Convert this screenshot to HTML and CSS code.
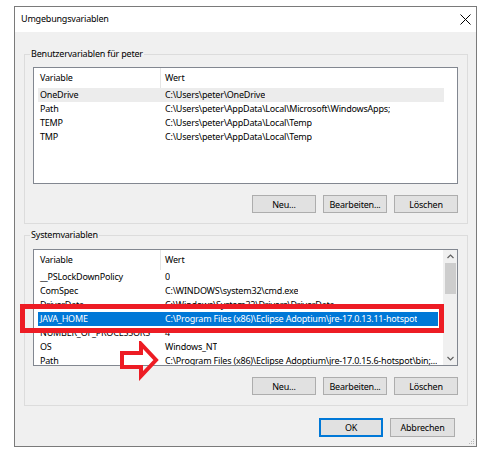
FILE: index.html
```html
<!DOCTYPE html>
<html lang="de">
<head>
<meta charset="utf-8">
<title>Umgebungsvariablen</title>
<link rel="stylesheet" href="styles.css">
</head>
<body>
<div class="dialog">
  <div class="titlebar">
    <span class="title">Umgebungsvariablen</span>
    <svg class="close" width="11" height="11" viewBox="0 0 11 11"><path d="M0.5 0.5 L10.5 10.5 M10.5 0.5 L0.5 10.5" stroke="#000" stroke-width="1" fill="none"/></svg>
  </div>
  <div class="content">
    <fieldset class="group">
      <legend>Benutzervariablen für peter</legend>
      <div class="list">
        <div class="pane">
          <div class="lhead"><div class="c1">Variable</div><div class="c2">Wert</div></div>
          <div class="row hover"><div class="c1">OneDrive</div><div class="c2">C:\Users\peter\OneDrive</div></div>
          <div class="row"><div class="c1">Path</div><div class="c2">C:\Users\peter\AppData\Local\Microsoft\WindowsApps;</div></div>
          <div class="row"><div class="c1">TEMP</div><div class="c2">C:\Users\peter\AppData\Local\Temp</div></div>
          <div class="row"><div class="c1">TMP</div><div class="c2">C:\Users\peter\AppData\Local\Temp</div></div>
        </div>
      </div>
      <div class="btnrow">
        <button class="btn">Neu...</button>
        <button class="btn">Bearbeiten...</button>
        <button class="btn">Löschen</button>
      </div>
    </fieldset>
    <fieldset class="group group2">
      <legend>Systemvariablen</legend>
      <div class="list">
        <div class="pane">
          <div class="lhead"><div class="c1">Variable</div><div class="c2">Wert</div></div>
          <div class="row"><div class="c1">__PSLockDownPolicy</div><div class="c2">0</div></div>
          <div class="row"><div class="c1">ComSpec</div><div class="c2">C:\WINDOWS\system32\cmd.exe</div></div>
          <div class="row"><div class="c1">DriverData</div><div class="c2">C:\Windows\System32\Drivers\DriverData</div></div>
          <div class="row selected"><div class="c1">JAVA_HOME</div><div class="c2">C:\Program Files (x86)\Eclipse Adoptium\jre-17.0.13.11-hotspot</div></div>
          <div class="row"><div class="c1">NUMBER_OF_PROCESSORS</div><div class="c2">4</div></div>
          <div class="row"><div class="c1">OS</div><div class="c2">Windows_NT</div></div>
          <div class="row"><div class="c1">Path</div><div class="c2">C:\Program Files (x86)\Eclipse Adoptium\jre-17.0.15.6-hotspot\bin;...</div></div>
        </div>
        <div class="scrollbar">
          <svg class="sarrow" width="7" height="5" viewBox="0 0 7 5"><path d="M0.5 4 L3.5 1 L6.5 4" stroke="#606060" stroke-width="1.2" fill="none"/></svg>
          <div class="track"><div class="thumb"></div></div>
          <svg class="sarrow" width="7" height="5" viewBox="0 0 7 5"><path d="M0.5 1 L3.5 4 L6.5 1" stroke="#606060" stroke-width="1.2" fill="none"/></svg>
        </div>
      </div>
      <div class="btnrow">
        <button class="btn">Neu...</button>
        <button class="btn">Bearbeiten...</button>
        <button class="btn">Löschen</button>
      </div>
    </fieldset>
    <div class="footer">
      <button class="btn default">OK</button>
      <button class="btn">Abbrechen</button>
    </div>
  </div>
  <svg class="grip" width="7" height="7" viewBox="0 0 7 7" fill="#b8b8b8"><rect x="5" y="1" width="1" height="1"/><rect x="3" y="3" width="1" height="1"/><rect x="5" y="3" width="1" height="1"/><rect x="1" y="5" width="1" height="1"/><rect x="3" y="5" width="1" height="1"/><rect x="5" y="5" width="1" height="1"/></svg>
</div>
<div class="redbox"></div>
<svg class="arrow" width="44" height="40" viewBox="0 0 44 40">
  <polygon points="4,12 23,12 23,3 38,19 23,35 23,26 4,26" fill="none" stroke="#ed1c24" stroke-width="4" stroke-linejoin="miter"/>
</svg>
</body>
</html>
```

FILE: styles.css
```css
* { box-sizing: border-box; }
html, body { margin: 0; padding: 0; background: #ffffff; }
body {
  font-family: "Noto Sans", "Open Sans", sans-serif;
  font-size: 9px;
  letter-spacing: -0.2px;
  color: #000;
}
.dialog {
  position: relative;
  margin: 6px 0 0 14px;
  width: 463px;
  height: 441px;
  border: 1px solid #7a7a7a;
  background: #f0f0f0;
  display: flex;
  flex-direction: column;
}
.titlebar {
  height: 25px;
  background: #ffffff;
  display: flex;
  align-items: center;
  justify-content: space-between;
  padding: 0 5px 1px 6px;
  flex: none;
}
.title { font-size: 9px; line-height: 14px; }
.close { display: block; }
.content {
  padding: 15px 8px 0 9px;
  display: flex;
  flex-direction: column;
}
.group {
  margin: 0;
  border: 1px solid #dcdcdc;
  padding: 6px 9px 10px 8px;
  min-width: 0;
}
.group legend {
  padding: 0 1px;
  margin-left: -3px;
  line-height: 14px;
  font-size: 9px;
}
.group2 { margin-top: 4px; padding-top: 7px; }
.list {
  height: 117px;
  background: #ffffff;
  border: 1px solid #828790;
  display: flex;
  overflow: hidden;
}
.pane { flex: 1; min-width: 0; }
.lhead {
  display: flex;
  width: 410px;
  height: 20px;
  align-items: center;
}
.lhead .c1 {
  width: 127px;
  padding-left: 6px;
  height: 20px;
  line-height: 20px;
  border-right: 1px solid #e5e5e5;
}
.lhead .c2 { padding-left: 4px; line-height: 20px; }
.row {
  display: flex;
  height: 14px;
  line-height: 14px;
  margin-left: 4px;
  width: 406px;
  white-space: nowrap;
}
.row .c1 { width: 123px; padding-left: 2px; flex: none; overflow: hidden; }
.row .c2 { padding-left: 4px; overflow: hidden; }
.row.hover { background: #ececec; }
.row.selected { background: #0078d7; color: #ffffff; width: 400px; }
.scrollbar {
  width: 14px;
  flex: none;
  background: #f0f0f0;
  display: flex;
  flex-direction: column;
  align-items: center;
  padding: 4px 0 4px;
}
.sarrow { display: block; flex: none; }
.track { flex: 1; width: 100%; padding: 4px 1px 0 2px; }
.thumb { height: 31px; background: #cdcdcd; }
.btnrow {
  display: flex;
  justify-content: flex-end;
  gap: 7px;
  margin-top: 11px;
}
.btn {
  width: 64px;
  height: 18px;
  padding: 0;
  margin: 0;
  background: #e1e1e1;
  border: 1px solid #adadad;
  font-family: "Noto Sans", "Open Sans", sans-serif;
  font-size: 9px;
  letter-spacing: -0.2px;
  line-height: 15px;
  color: #000;
}
.footer {
  display: flex;
  justify-content: flex-end;
  gap: 7px;
  margin-top: 12px;
  padding-right: 13px;
}
.footer .btn { height: 19px; }
.footer .btn:last-child { width: 65px; }
.btn.default { border: 1px solid #0078d7; box-shadow: inset 0 0 0 1px #0078d7; }
.grip { position: absolute; right: 1px; bottom: 1px; }
.redbox {
  position: absolute;
  left: 20px;
  top: 304px;
  width: 424px;
  height: 29px;
  border: 5px solid #ed1c24;
}
.arrow { position: absolute; left: 118px; top: 341px; }
```
